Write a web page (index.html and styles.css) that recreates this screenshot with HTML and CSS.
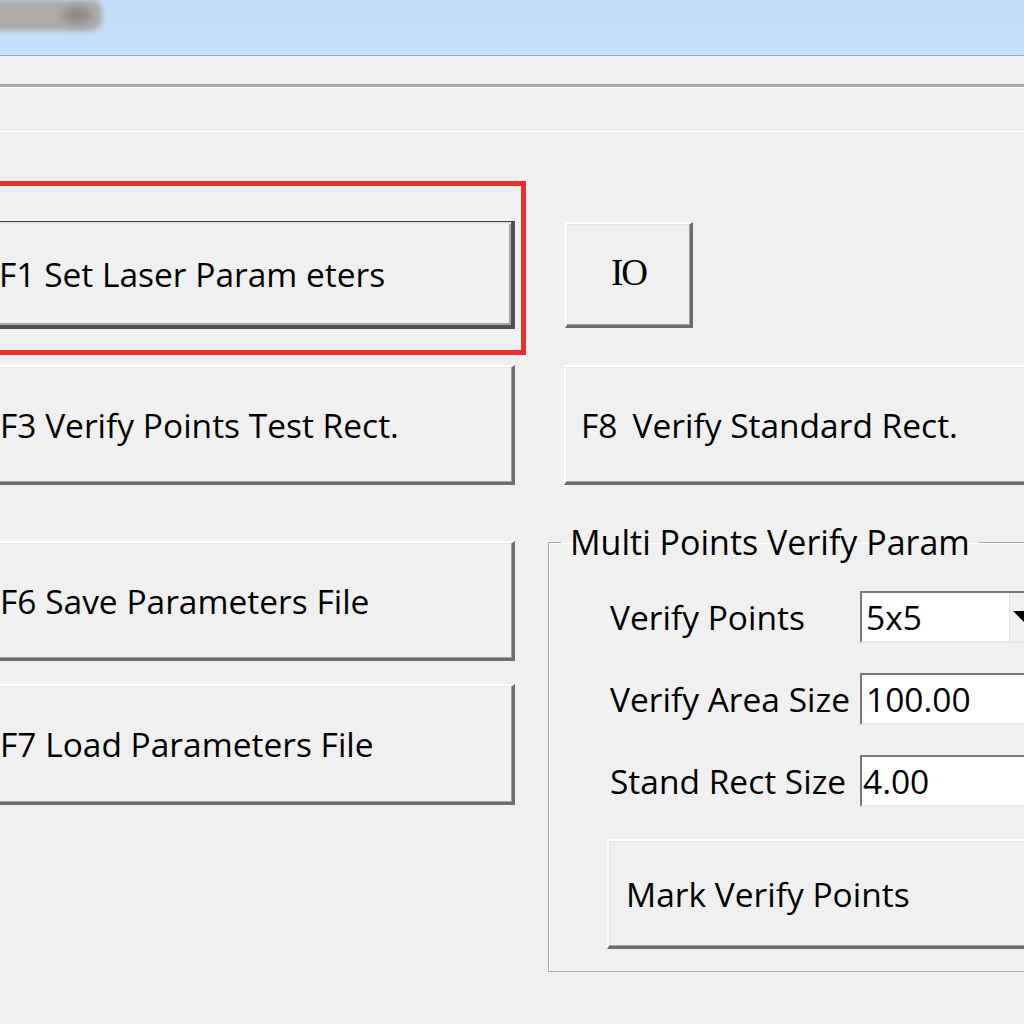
FILE: index.html
```html
<!DOCTYPE html>
<html>
<head>
<meta charset="utf-8">
<link rel="stylesheet" href="styles.css">
</head>
<body>
<div class="window">
  <div class="titlebar"><div class="blob"><div class="blob-core"></div></div></div>
  <div class="menubar"></div>
  <div class="toolbar"></div>
  <div class="content">
    <div class="col-left">
      <div class="focus-ring">
        <button class="btn btn-default">F1 Set Laser Param eters</button>
      </div>
      <button class="btn wide f3">F3 Verify Points Test Rect.</button>
      <button class="btn wide f6">F6 Save Parameters File</button>
      <button class="btn wide f7">F7 Load Parameters File</button>
    </div>
    <div class="col-right">
      <button class="btn io">IO</button>
      <button class="btn f8"><span class="key">F8</span>Verify Standard Rect.</button>
      <fieldset class="group">
        <legend>Multi Points Verify Param</legend>
        <div class="group-body">
          <div class="field first">
            <span class="label">Verify Points</span>
            <div class="combo">
              <span class="value">5x5</span>
              <span class="drop">
                <svg width="24" height="12" viewBox="0 0 24 12"><polygon points="0,0 24,0 12,12" fill="#000"/></svg>
              </span>
            </div>
          </div>
          <div class="field">
            <span class="label">Verify Area Size</span>
            <div class="edit"><span class="value">100.00</span></div>
          </div>
          <div class="field">
            <span class="label">Stand Rect Size</span>
            <div class="edit"><span class="value v-small">4.00</span></div>
          </div>
          <button class="btn mark">Mark Verify Points</button>
        </div>
      </fieldset>
    </div>
  </div>
</div>
</body>
</html>
```

FILE: styles.css
```css
html, body {
  margin: 0;
  padding: 0;
  width: 1024px;
  height: 1024px;
  overflow: hidden;
  background: #f0f0f0;
}

.window {
  width: 1024px;
  height: 1024px;
  overflow: hidden;
  background: #f0f0f0;
  font-family: "Open Sans", "Noto Sans", sans-serif;
  color: #000;
}

.titlebar {
  height: 55px;
  background: linear-gradient(180deg, #c0ddf8 0%, #c4e0fa 100%);
  border-bottom: 1px solid #8ea6bf;
  overflow: hidden;
}

.blob {
  margin-left: -12px;
  width: 114px;
  height: 31px;
  background: #acacac;
  border-radius: 4px 10px 12px 4px;
  filter: blur(2.5px);
  display: flex;
  justify-content: flex-end;
  align-items: center;
  padding-right: 10px;
  box-sizing: border-box;
}

.blob-core {
  width: 30px;
  height: 17px;
  background: #8a8a8a;
  border-radius: 50%;
  filter: blur(3px);
}

.menubar {
  height: 28px;
  border-bottom: 3px solid #ababab;
  box-shadow: 0 1px 0 #fbfbfb;
}

.toolbar {
  height: 44px;
  border-bottom: 1px solid #ffffff;
}

.content {
  display: flex;
  gap: 22px;
  margin-left: -30px;
}

.col-left {
  width: 556px;
  flex-shrink: 0;
  display: flex;
  flex-direction: column;
  padding-top: 49px;
}

.col-right {
  width: 520px;
  flex-shrink: 0;
  display: flex;
  flex-direction: column;
  align-items: flex-start;
}

.btn {
  font-family: "Open Sans", "Noto Sans", sans-serif;
  font-size: 33.5px;
  color: #000;
  background: #f0f0f0;
  text-align: left;
  padding: 0 0 0 15px;
  margin: 0;
  box-sizing: border-box;
  border-style: solid;
  border-width: 2px 3px 3px 2px;
  border-color: #fcfcfc #6d6d6d #6d6d6d #fcfcfc;
  box-shadow: inset -1px -1px 0 #a3a3a3, inset 1px 1px 0 #e6e6e6;
  white-space: pre;
  cursor: default;
}

.focus-ring {
  border: 5px solid #ec2f2f;
  padding: 35px 6px 21px 8px;
}

.btn-default {
  width: 532px;
  height: 108px;
  display: block;
  border-width: 1px 4px 4px 1px;
  border-color: #3d3d3d #505050 #505050 #3d3d3d;
  box-shadow: inset 2px 2px 0 #e4e4e4, inset -2px -2px 0 #a8a8a8;
}

.wide {
  width: 532px;
  margin-left: 13px;
}

.f3 {
  height: 120px;
  margin-top: 10px;
}

.f6 {
  height: 120px;
  margin-top: 56px;
}

.f7 {
  height: 121px;
  margin-top: 23px;
}

.io {
  margin-top: 90px;
  margin-left: 17px;
  width: 128px;
  height: 106px;
  padding: 0 0 4px 0;
  text-align: center;
  font-family: "Liberation Serif", "DejaVu Serif", serif;
  font-size: 37px;
  letter-spacing: -2px;
}

.f8 {
  margin-top: 37px;
  margin-left: 16px;
  width: 500px;
  height: 120px;
  padding-left: 15px;
}

.f8 .key {
  margin-right: 15px;
}

.group {
  margin: 37px 0 0 0;
  padding: 0 0 22px 0;
  width: 520px;
  box-sizing: border-box;
  border: 1px solid #a8a8a8;
  box-shadow: inset 1px 1px 0 #ffffff;
  min-width: 0;
}

.group legend {
  font-size: 34px;
  line-height: 40px;
  padding: 0 9px;
  margin-left: 12px;
}

.group-body {
  padding-left: 59px;
  display: flex;
  flex-direction: column;
  align-items: flex-start;
}

.field {
  display: flex;
  align-items: center;
  height: 52px;
  margin-top: 30px;
}

.field.first {
  margin-top: 29px;
}

.label {
  width: 252px;
  flex-shrink: 0;
  padding-left: 2px;
  box-sizing: border-box;
  font-size: 33.5px;
  white-space: nowrap;
}

.combo, .edit {
  width: 200px;
  height: 52px;
  box-sizing: border-box;
  background: #fff;
  border-style: solid;
  border-width: 2px 0 2px 2px;
  border-color: #7a7a7a #e3e3e3 #e8e8e8 #7a7a7a;
  display: flex;
  align-items: center;
}

.value {
  font-size: 33.5px;
  padding-left: 4px;
}

.v-small {
  padding-left: 1px;
}

.combo .drop {
  margin-left: auto;
  width: 53px;
  height: 100%;
  box-sizing: border-box;
  background: #f0f0f0;
  border-left: 2px solid #fdfdfd;
  box-shadow: inset 1px 0 0 #e0e0e0;
  display: flex;
  align-items: center;
  padding-left: 4px;
}

.drop svg {
  display: block;
}

.mark {
  margin-top: 32px;
  margin-left: -1px;
  width: 460px;
  height: 110px;
  padding-left: 17px;
}
```
